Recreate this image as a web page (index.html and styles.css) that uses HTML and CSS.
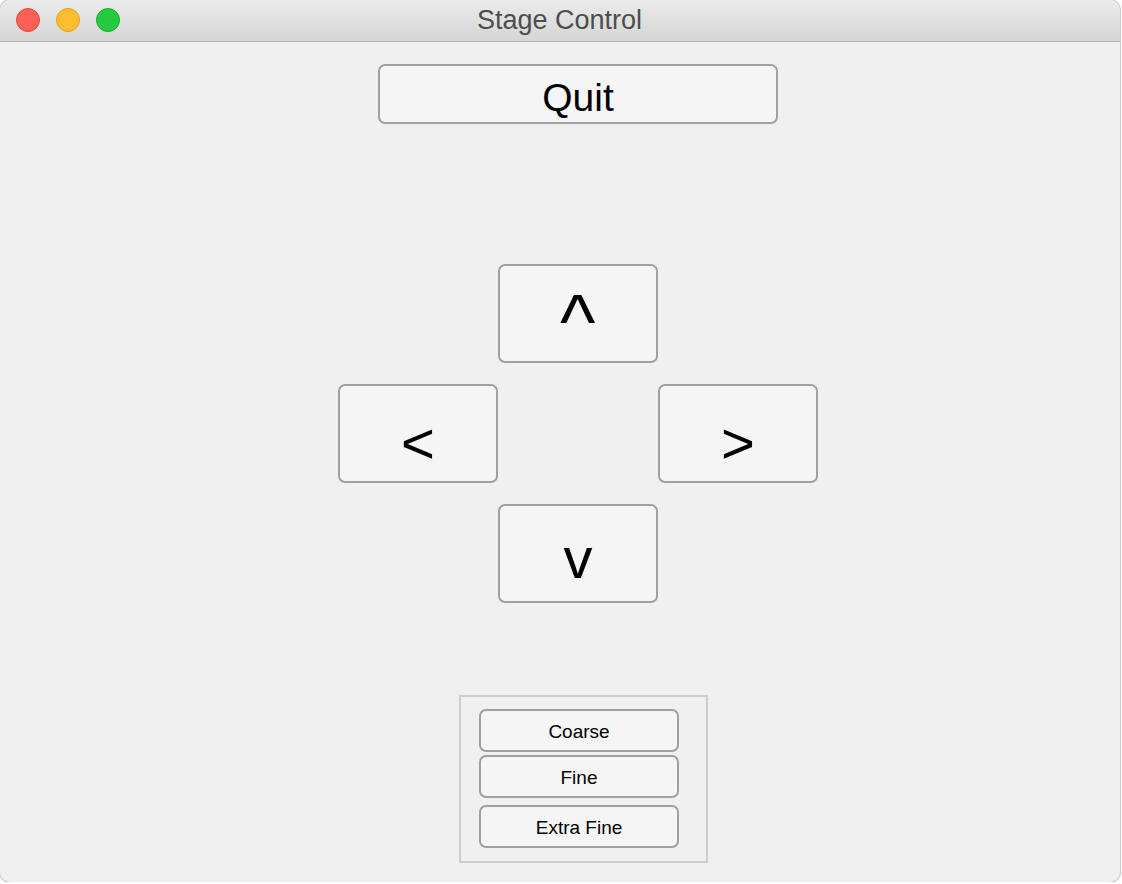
FILE: index.html
```html
<!DOCTYPE html>
<html>
<head>
<meta charset="utf-8">
<title>Stage Control</title>
<link rel="stylesheet" href="styles.css">
</head>
<body>
<div class="window">
  <div class="titlebar">
    <div class="lights">
      <span class="light red"></span>
      <span class="light yellow"></span>
      <span class="light green"></span>
    </div>
    <div class="title">Stage Control</div>
  </div>
  <div class="content">
    <button class="btn quit">Quit</button>
    <div class="dpad">
      <button class="btn arrow up"><span class="caret">^</span></button>
      <button class="btn arrow left">&lt;</button>
      <button class="btn arrow right">&gt;</button>
      <button class="btn arrow down">v</button>
    </div>
    <div class="group">
      <button class="btn small">Coarse</button>
      <button class="btn small">Fine</button>
      <button class="btn small extra">Extra Fine</button>
    </div>
  </div>
</div>
</body>
</html>
```
FILE: styles.css
```css
* { box-sizing: border-box; }
html, body {
  margin: 0;
  padding: 0;
  background: #ffffff;
  font-family: "Liberation Sans", Arial, sans-serif;
}
.window {
  width: 1120px;
  height: 882px;
  background: #f0f0f0;
  border-radius: 10px;
  overflow: hidden;
  box-shadow: 0 0 0 1px #c8c8c8;
  display: flex;
  flex-direction: column;
}
.titlebar {
  height: 42px;
  flex: none;
  background: linear-gradient(#ebebeb, #d5d5d5);
  border-bottom: 1px solid #b2b2b2;
  position: relative;
  display: flex;
  align-items: center;
  justify-content: center;
}
.lights {
  position: absolute;
  left: 16px;
  top: 8px;
  display: flex;
  gap: 16px;
}
.light {
  width: 24px;
  height: 24px;
  border-radius: 50%;
  display: block;
}
.red { background: #fe5f57; border: 1px solid #e2463f; }
.yellow { background: #febc2e; border: 1px solid #e1a116; }
.green { background: #28c840; border: 1px solid #14ae2a; }
.title {
  font-family: "Liberation Sans", Arial, sans-serif;
  font-size: 27px;
  line-height: 1;
  color: #4d4d4d;
  margin-left: -1px;
  margin-top: 0;
}
.content {
  flex: 1;
  display: flex;
  flex-direction: column;
  align-items: flex-start;
}
.btn {
  font-family: "Liberation Sans", Arial, sans-serif;
  background: #f5f5f5;
  border: 2px solid #a0a0a0;
  border-radius: 7px;
  color: #000;
  padding: 0;
  display: flex;
  align-items: center;
  justify-content: center;
}
.quit {
  width: 400px;
  height: 60px;
  margin-top: 22px;
  margin-left: 378px;
  font-size: 39px;
  line-height: 1;
  padding-top: 6px;
}
.dpad {
  margin-top: 140px;
  margin-left: 338px;
  display: grid;
  grid-template-columns: 160px 160px 160px;
  grid-template-rows: 99px 99px 99px;
  row-gap: 21px;
}
.arrow {
  width: 160px;
  height: 99px;
  font-size: 58px;
  line-height: 1;
}
.up { grid-column: 2; grid-row: 1; padding-top: 16px; }
.left { grid-column: 1; grid-row: 2; padding-top: 18px; }
.right { grid-column: 3; grid-row: 2; padding-top: 18px; }
.down { grid-column: 2; grid-row: 3; padding-top: 8px; }
.caret {
  display: inline-block;
  transform: scale(1.3, 1.35);
}
.group {
  margin-top: 92px;
  margin-left: 459px;
  width: 249px;
  height: 168px;
  border: 2px solid #cdcdcd;
  padding: 12px 28px 0 18px;
  display: flex;
  flex-direction: column;
}
.small {
  width: 200px;
  height: 43px;
  font-size: 19px;
  line-height: 1;
  padding-top: 2px;
  flex: none;
}
.small + .small { margin-top: 3px; }
.small.extra { margin-top: 7px; }
```
